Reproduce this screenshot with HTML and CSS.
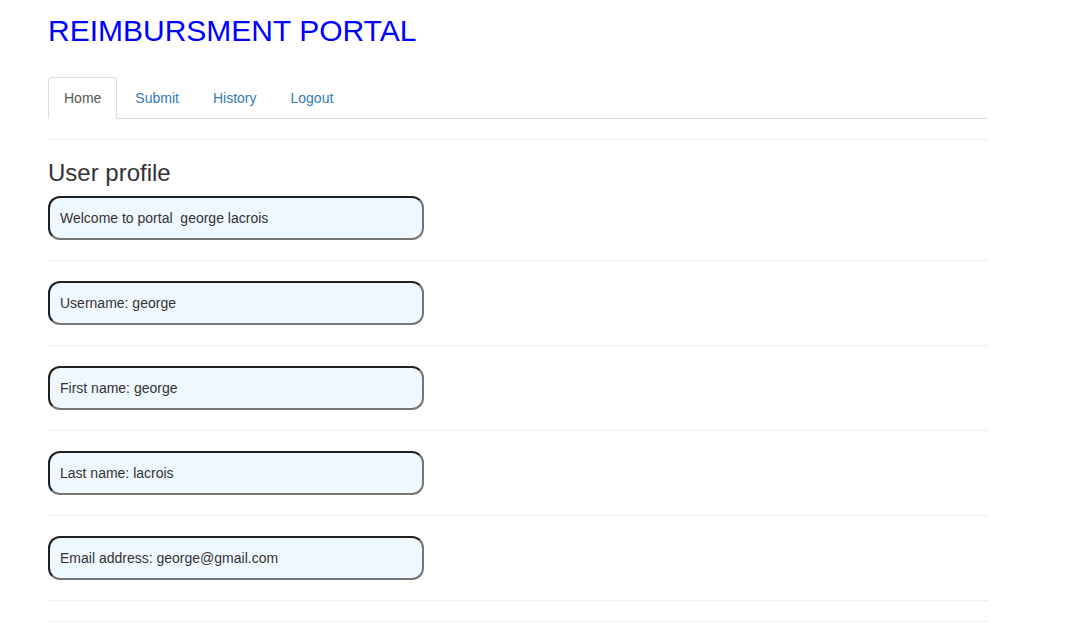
FILE: index.html
```html
<!DOCTYPE html>
<html>
<head>
<meta charset="utf-8">
<title>Reimbursment Portal</title>
<link rel="stylesheet" href="styles.css">
</head>
<body>
<div class="container">
  <h2 class="title">REIMBURSMENT PORTAL</h2>
  <ul class="tabs">
    <li class="tab active"><a href="#">Home</a></li>
    <li class="tab"><a href="#">Submit</a></li>
    <li class="tab"><a href="#">History</a></li>
    <li class="tab"><a href="#">Logout</a></li>
  </ul>
  <hr class="rule">
  <h3 class="subtitle">User profile</h3>
  <div class="field">Welcome to portal&nbsp; george lacrois</div>
  <hr class="rule">
  <div class="field">Username: george</div>
  <hr class="rule">
  <div class="field">First name: george</div>
  <hr class="rule">
  <div class="field">Last name: lacrois</div>
  <hr class="rule">
  <div class="field">Email address: george@gmail.com</div>
  <hr class="rule">
  <hr class="rule">
</div>
</body>
</html>
```

FILE: styles.css
```css
* { box-sizing: border-box; }
html, body { margin: 0; padding: 0; background: #fff; }
body {
  font-family: "Liberation Sans", Arial, sans-serif;
  font-size: 14px;
  line-height: 1.42857;
  color: #333;
}
.container {
  width: 940px;
  margin-left: 48px;
}
.title {
  margin: 14px 0 30px;
  font-size: 30px;
  font-weight: 400;
  line-height: 33px;
  color: #0000ff;
}
.tabs {
  list-style: none;
  margin: 0;
  padding: 0;
  display: flex;
  border-bottom: 1px solid #ddd;
}
.tab { margin-bottom: -1px; }
.tab a {
  display: block;
  padding: 10px 15px;
  margin-right: 2px;
  line-height: 20px;
  border: 1px solid transparent;
  border-radius: 4px 4px 0 0;
  color: #337ab7;
  text-decoration: none;
}
.tab.active a {
  color: #555;
  background: #fff;
  border-color: #ddd #ddd transparent;
}
.rule {
  margin: 20px 0;
  border: 0;
  border-top: 1px solid #eee;
  height: 0;
}
.subtitle {
  margin: 20px 0 10px;
  font-size: 24px;
  font-weight: 400;
  line-height: 26.4px;
  color: #333;
}
.field {
  width: 376px;
  padding: 10px;
  line-height: 20px;
  background: #f0f8ff;
  border: 2px solid;
  border-color: #1f1f1f #767676 #767676 #1f1f1f;
  border-radius: 12px;
  color: #333;
}
```
